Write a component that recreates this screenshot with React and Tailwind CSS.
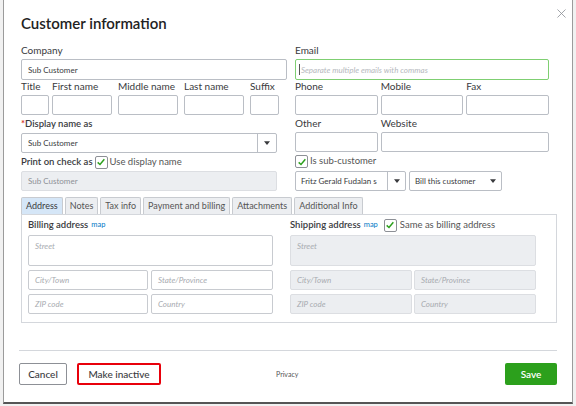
import { X } from 'lucide-react';

const font = { fontFamily: 'Lato, "Open Sans", sans-serif' };

function Check() {
  return (
    <span className="inline-flex w-[13px] h-[13px] items-center justify-center border border-[#8d9096] bg-white rounded-[2px]">
      <svg viewBox="0 0 12 12" className="w-[10px] h-[10px]">
        <path d="M2 6.5 L4.8 9 L10 2.8" fill="none" stroke="#2ca01c" strokeWidth="1.8" />
      </svg>
    </span>
  );
}

function Caret() {
  return (
    <svg viewBox="0 0 8 5" className="w-[6px] h-[4px]">
      <path d="M0 0 H8 L4 5 Z" fill="#393a3d" />
    </svg>
  );
}

function Field({ className = '', children }) {
  return (
    <div className={`border border-[#babec5] bg-white rounded-[2px] ${className}`}>{children}</div>
  );
}

function Ph({ children, className = '' }) {
  return (
    <div className={`border border-[#c8cbd0] rounded-[2px] px-[6px] text-[8px] italic text-[#a8abb0] ${className}`}>
      {children}
    </div>
  );
}

export default function App() {
  const tabs = ['Address', 'Notes', 'Tax info', 'Payment and billing', 'Attachments', 'Additional Info'];

  return (
    <div className="w-[576px] h-[406px] bg-[#f1f1f1] overflow-hidden" style={font}>
      <div className="relative ml-[3px] w-[570px] h-[404px] bg-white border-x border-[#9b9b9b] border-b-2 border-b-[#555] text-[#393a3d]">
        <X className="absolute right-[3px] top-[6px] w-[15px] h-[15px] text-[#8d9096]" strokeWidth={1.3} />

        <div className="pl-[17px] pt-[12px] h-[44px]">
          <h1 className="text-[15px] leading-[22px] font-semibold text-[#222]">Customer information</h1>
        </div>

        <div className="flex pl-[17px] gap-[8px]">
          {/* left column */}
          <div className="w-[266px] flex flex-col">
            <div className="h-[15px] text-[10px] leading-[13px]">Company</div>
            <Field className="h-[21px] flex items-center px-[6px] text-[8px]">Sub Customer</Field>
            <div className="flex gap-[3px]">
              {[
                ['Title', 'w-[28px]'],
                ['First name', 'w-[60px]'],
                ['Middle name', 'w-[60px]'],
                ['Last name', 'w-[60px]'],
                ['Suffix', 'w-[29px]'],
              ].map(([l, w], i) => (
                <div key={l} className={`${w} flex flex-col ${i > 1 ? 'ml-[3px]' : ''}`}>
                  <div className="h-[15px] text-[10px] leading-[13px] whitespace-nowrap">{l}</div>
                  <Field className="h-[20px]" />
                </div>
              ))}
            </div>
            <div className="h-[18px] text-[9.5px] leading-[18px] font-semibold">
              <span className="text-[#d52b1e]">*</span>Display name as
            </div>
            <Field className="w-[256px] h-[20px] flex items-center text-[8px]">
              <span className="flex-1 px-[6px]">Sub Customer</span>
              <span className="w-[19px] h-full border-l border-[#babec5] flex items-center justify-center">
                <Caret />
              </span>
            </Field>
            <div className="h-[18px] flex items-center gap-[2px] text-[9.5px]">
              <span className="font-semibold">Print on check as</span>
              <Check />
              <span className="text-[#555]">Use display name</span>
            </div>
            <div className="w-[256px] h-[20px] bg-[#eceef1] border border-[#dcdee2] rounded-[2px] flex items-center px-[6px] text-[8px] text-[#8d9096]">
              Sub Customer
            </div>
          </div>

          {/* right column */}
          <div className="w-[254px] flex flex-col">
            <div className="h-[15px] text-[10px] leading-[13px]">Email</div>
            <div className="h-[21px] border border-[#7fcf72] rounded-[2px] flex items-center px-[3px] text-[8px] italic text-[#b5b8bd]">
              <span className="w-px h-[11px] bg-[#555] mr-[1px]" />
              Separate multiple emails with commas
            </div>
            <div className="flex gap-[3px]">
              {['Phone', 'Mobile', 'Fax'].map((l) => (
                <div key={l} className="w-[83px] flex flex-col">
                  <div className="h-[15px] text-[10px] leading-[13px]">{l}</div>
                  <Field className="h-[20px]" />
                </div>
              ))}
            </div>
            <div className="flex gap-[3px]">
              <div className="w-[83px] flex flex-col">
                <div className="h-[17px] text-[10px] leading-[17px]">Other</div>
                <Field className="h-[20px]" />
              </div>
              <div className="w-[169px] flex flex-col">
                <div className="h-[17px] text-[10px] leading-[17px]">Website</div>
                <Field className="h-[20px]" />
              </div>
            </div>
            <div className="h-[19px] flex items-center gap-[2px] text-[9.5px] text-[#555]">
              <Check />
              <span>Is sub-customer</span>
            </div>
            <div className="flex gap-[3px] text-[8px]">
              <Field className="w-[111px] h-[20px] flex items-center">
                <span className="flex-1 pl-[5px] whitespace-nowrap overflow-hidden">Fritz Gerald Fudalan s</span>
                <span className="w-[18px] h-full border-l border-[#babec5] flex items-center justify-center">
                  <Caret />
                </span>
              </Field>
              <Field className="w-[93px] h-[20px] flex items-center justify-between px-[5px]">
                <span>Bill this customer</span>
                <Caret />
              </Field>
            </div>
          </div>
        </div>

        {/* tabs */}
        <div className="ml-[17px] mt-[6px] flex gap-[2px] text-[9px]">
          {tabs.map((t, i) => (
            <div
              key={t}
              className={`h-[17px] px-[4px] flex items-center border border-b-0 border-[#c8cbd0] rounded-t-[2px] ${
                i === 0 ? 'bg-[#d5e6f7] text-[#393a3d]' : 'bg-[#eceef1] text-[#555]'
              }`}
            >
              {t}
            </div>
          ))}
        </div>
        <div className="ml-[17px] w-[536px] h-[109px] border border-[#d4d7dc] px-[6px] flex gap-[17px]">
          <div className="w-[245px] flex flex-col">
            <div className="h-[20px] flex items-center gap-[3px]">
              <span className="text-[9.5px] font-semibold">Billing address</span>
              <span className="text-[7.5px] text-[#0077c5]">map</span>
            </div>
            <Ph className="h-[31px] pt-[4px]">Street</Ph>
            <div className="flex gap-[3px] mt-[4px]">
              <Ph className="w-[120px] h-[20px] flex items-center">City/Town</Ph>
              <Ph className="w-[122px] h-[20px] flex items-center">State/Province</Ph>
            </div>
            <div className="flex gap-[3px] mt-[4px]">
              <Ph className="w-[120px] h-[20px] flex items-center">ZIP code</Ph>
              <Ph className="w-[122px] h-[20px] flex items-center">Country</Ph>
            </div>
          </div>
          <div className="w-[246px] flex flex-col">
            <div className="h-[20px] flex items-center gap-[3px]">
              <span className="text-[9.5px] font-semibold">Shipping address</span>
              <span className="text-[7.5px] text-[#0077c5] mr-[3px]">map</span>
              <Check />
              <span className="text-[9.5px] text-[#555]">Same as billing address</span>
            </div>
            <Ph className="h-[31px] pt-[4px] bg-[#eceef1] border-[#dcdee2]">Street</Ph>
            <div className="flex gap-[2px] mt-[4px]">
              <Ph className="w-[122px] h-[20px] flex items-center bg-[#eceef1] border-[#dcdee2]">City/Town</Ph>
              <Ph className="w-[122px] h-[20px] flex items-center bg-[#eceef1] border-[#dcdee2]">State/Province</Ph>
            </div>
            <div className="flex gap-[2px] mt-[4px]">
              <Ph className="w-[122px] h-[20px] flex items-center bg-[#eceef1] border-[#dcdee2]">ZIP code</Ph>
              <Ph className="w-[122px] h-[20px] flex items-center bg-[#eceef1] border-[#dcdee2]">Country</Ph>
            </div>
          </div>
        </div>

        {/* footer */}
        <div className="mx-[15px] mt-[27px] border-t border-[#d4d7dc]" />
        <div className="mx-[15px] mt-[12px] flex items-center text-[10px]">
          <button className="w-[48px] h-[22px] border border-[#8d9096] rounded-[2px] font-medium">Cancel</button>
          <button className="ml-[10px] w-[84px] h-[22px] border-2 border-[#e8000b] rounded-[2px] font-medium">
            Make inactive
          </button>
          <span className="ml-[115px] text-[7px] text-[#555]">Privacy</span>
          <button className="ml-auto w-[52px] h-[22px] bg-[#2ca01c] rounded-[2px] text-white font-semibold">
            Save
          </button>
        </div>
      </div>
    </div>
  );
}
